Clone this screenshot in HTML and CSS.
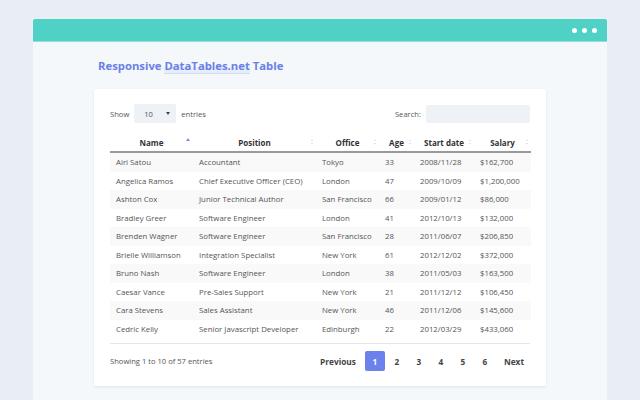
FILE: index.html
```html
<!DOCTYPE html>
<html>
<head>
<meta charset="utf-8">
<link rel="stylesheet" href="styles.css">
</head>
<body>
<div class="window">
  <div class="titlebar">
    <span class="dot"></span><span class="dot"></span><span class="dot"></span>
  </div>
  <div class="content">
    <h1 class="title">Responsive <span class="hl">DataTables.net</span> Table</h1>
    <div class="card">
      <div class="controls">
        <label class="length">Show <span class="select">10 <span class="caret"></span></span> entries</label>
        <label class="search">Search: <span class="input"></span></label>
      </div>
      <table class="dt">
        <colgroup>
          <col class="c1"><col class="c2"><col class="c3"><col class="c4"><col class="c5"><col class="c6">
        </colgroup>
        <thead>
          <tr>
            <th class="asc">Name</th>
            <th>Position</th>
            <th>Office</th>
            <th>Age</th>
            <th>Start date</th>
            <th>Salary</th>
          </tr>
        </thead>
        <tbody>
          <tr><td>Airi Satou</td><td>Accountant</td><td>Tokyo</td><td>33</td><td>2008/11/28</td><td>$162,700</td></tr>
          <tr><td>Angelica Ramos</td><td>Chief Executive Officer (CEO)</td><td>London</td><td>47</td><td>2009/10/09</td><td>$1,200,000</td></tr>
          <tr><td>Ashton Cox</td><td>Junior Technical Author</td><td>San Francisco</td><td>66</td><td>2009/01/12</td><td>$86,000</td></tr>
          <tr><td>Bradley Greer</td><td>Software Engineer</td><td>London</td><td>41</td><td>2012/10/13</td><td>$132,000</td></tr>
          <tr><td>Brenden Wagner</td><td>Software Engineer</td><td>San Francisco</td><td>28</td><td>2011/06/07</td><td>$206,850</td></tr>
          <tr><td>Brielle Williamson</td><td>Integration Specialist</td><td>New York</td><td>61</td><td>2012/12/02</td><td>$372,000</td></tr>
          <tr><td>Bruno Nash</td><td>Software Engineer</td><td>London</td><td>38</td><td>2011/05/03</td><td>$163,500</td></tr>
          <tr><td>Caesar Vance</td><td>Pre-Sales Support</td><td>New York</td><td>21</td><td>2011/12/12</td><td>$106,450</td></tr>
          <tr><td>Cara Stevens</td><td>Sales Assistant</td><td>New York</td><td>46</td><td>2011/12/06</td><td>$145,600</td></tr>
          <tr><td>Cedric Kelly</td><td>Senior Javascript Developer</td><td>Edinburgh</td><td>22</td><td>2012/03/29</td><td>$433,060</td></tr>
        </tbody>
      </table>
      <div class="footer">
        <div class="info">Showing 1 to 10 of 57 entries</div>
        <div class="pager">
          <span class="pg text">Previous</span>
          <span class="pg current">1</span>
          <span class="pg">2</span>
          <span class="pg">3</span>
          <span class="pg">4</span>
          <span class="pg">5</span>
          <span class="pg">6</span>
          <span class="pg text last">Next</span>
        </div>
      </div>
    </div>
  </div>
</div>
</body>
</html>
```
FILE: styles.css
```css
html, body {
  margin: 0;
  padding: 0;
}
body {
  background: #e9eef4;
  font-family: "Open Sans", "Noto Sans", sans-serif;
  color: #444;
  width: 640px;
  height: 400px;
  overflow: hidden;
}
.window {
  margin: 19px 0 0 33px;
  width: 574px;
  height: 400px;
  background: #f4f8fb;
  border-radius: 2px 2px 0 0;
}
.titlebar {
  height: 22px;
  background: #50d1c6;
  border-radius: 2px 2px 0 0;
  display: flex;
  justify-content: flex-end;
  align-items: center;
  gap: 5px;
  padding-right: 10px;
  border-bottom: 1px solid #8fe0d8;
}
.dot {
  width: 5px;
  height: 5px;
  border-radius: 50%;
  background: #fff;
}
.content {
  padding: 0 61px;
}
.title {
  margin: 0;
  padding: 16px 0 0 4px;
  font-size: 11.3px;
  font-weight: 700;
  color: #6a80e6;
  height: 47px;
  box-sizing: border-box;
  line-height: 16px;
}
.hl {
  border-bottom: 1px solid #d3dcf6;
  background: linear-gradient(transparent 60%, #e8edfa 60%);
}
.card {
  background: #fff;
  width: 452px;
  box-sizing: border-box;
  padding: 15px 16px 15px 16px;
  box-shadow: 0 1px 3px rgba(0, 0, 0, 0.08);
  border-radius: 2px;
}
.controls {
  display: flex;
  justify-content: space-between;
  align-items: center;
  font-size: 7.6px;
  color: #555;
  height: 19px;
}
.length, .search {
  display: flex;
  align-items: center;
  gap: 5px;
}
.select {
  width: 42px;
  height: 19px;
  box-sizing: border-box;
  background: #eef2f7;
  border-radius: 2px;
  display: flex;
  align-items: center;
  justify-content: space-between;
  padding: 0 6px 0 10px;
  color: #555;
}
.caret {
  width: 0;
  height: 0;
  border-left: 2px solid transparent;
  border-right: 2px solid transparent;
  border-top: 3px solid #444;
}
.input {
  width: 104px;
  height: 18px;
  background: #eef2f7;
  border-radius: 2px;
}
.dt {
  width: 421px;
  border-collapse: collapse;
  margin-top: 10px;
  table-layout: fixed;
  font-size: 7.8px;
}
.c1 { width: 83px; }
.c2 { width: 123px; }
.c3 { width: 63px; }
.c4 { width: 35px; }
.c5 { width: 60px; }
.c6 { width: 57px; }
.dt th {
  font-weight: 700;
  color: #333;
  text-align: center;
  height: 18px;
  padding: 0;
  position: relative;
  border-bottom: 2px solid #9a9a9a;
  font-size: 8px;
}
.dt th::after {
  content: "";
  position: absolute;
  right: 3px;
  top: 6px;
  width: 0;
  height: 0;
  border-left: 1.5px solid transparent;
  border-right: 1.5px solid transparent;
  border-bottom: 2px solid #dadde2;
}
.dt th::before {
  content: "";
  position: absolute;
  right: 3px;
  top: 10px;
  width: 0;
  height: 0;
  border-left: 1.5px solid transparent;
  border-right: 1.5px solid transparent;
  border-top: 2px solid #dadde2;
}
.dt th.asc::after {
  border-left-width: 2px;
  border-right-width: 2px;
  border-bottom: 3px solid #7b8ee8;
  right: 3px;
  top: 5px;
}
.dt th.asc::before {
  display: none;
}
.dt td {
  height: 18.5px;
  padding: 0 6px;
  color: #555;
  white-space: nowrap;
  overflow: hidden;
}
.dt tbody tr:nth-child(odd) td {
  background: #f9f9f9;
}
.footer {
  display: flex;
  justify-content: space-between;
  align-items: center;
  margin-top: 5px;
  padding-top: 7px;
  border-top: 1px solid #e6e6e6;
  font-size: 7.6px;
  color: #555;
}
.pager {
  display: flex;
  align-items: center;
}
.pg {
  font-weight: 700;
  color: #444;
  min-width: 20px;
  height: 20px;
  display: flex;
  align-items: center;
  justify-content: center;
  margin: 0 1px;
  font-size: 8.2px;
}
.pg.text {
  padding: 0 7px;
  font-size: 8.3px;
}
.pg.text.last {
  padding-right: 5px;
}
.pg.current {
  background: #6b82ec;
  color: #fff;
  border-radius: 2px;
}
```
